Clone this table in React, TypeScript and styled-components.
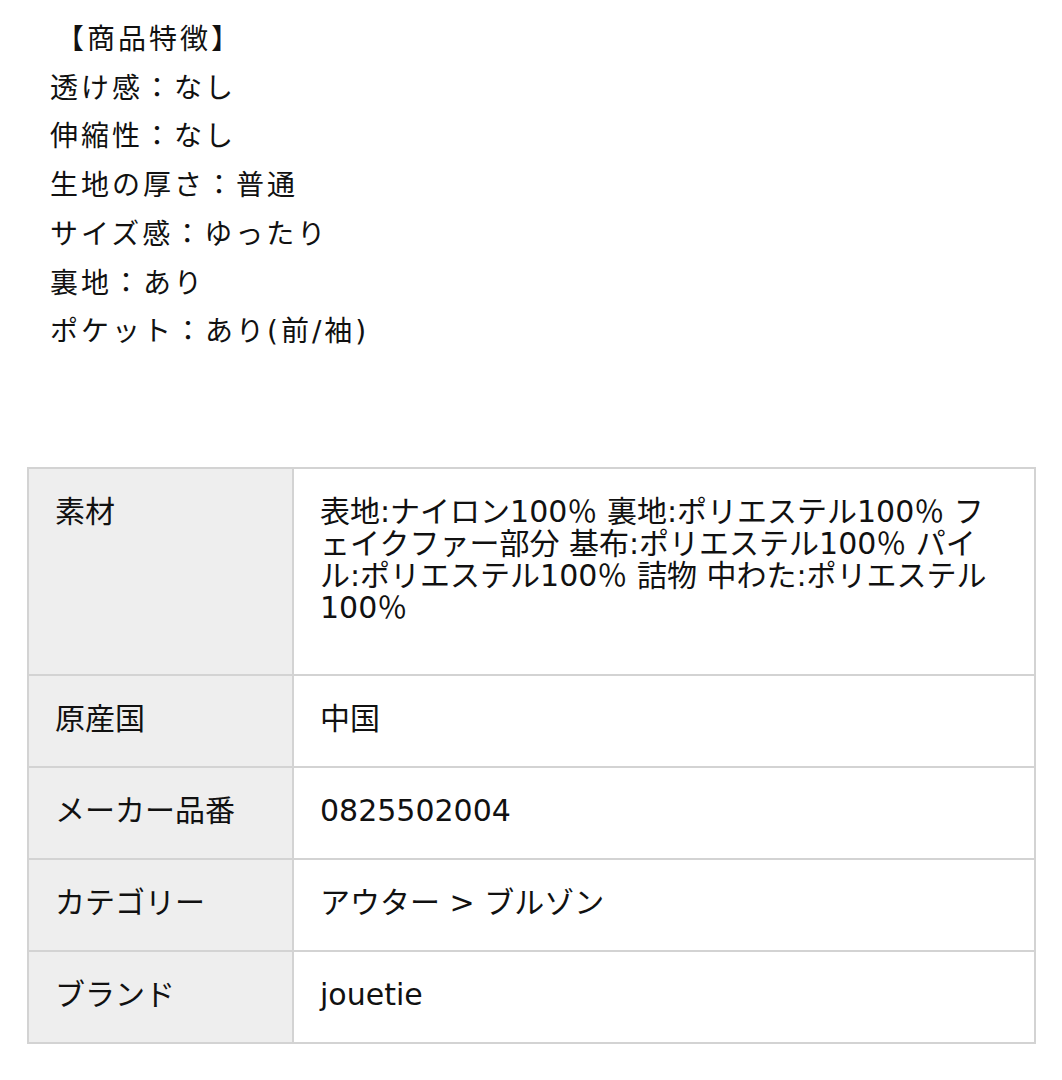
import React from 'react'
import styled, { createGlobalStyle } from 'styled-components'

interface SpecRow {
    label: string
    value: string
    tall?: boolean
}

const features: string[] = [
    '【商品特徴】',
    '透け感：なし',
    '伸縮性：なし',
    '生地の厚さ：普通',
    'サイズ感：ゆったり',
    '裏地：あり',
    'ポケット：あり(前/袖)',
]

const specs: SpecRow[] = [
    {
        label: '素材',
        value: '表地:ナイロン100％ 裏地:ポリエステル100％ フェイクファー部分 基布:ポリエステル100％ パイル:ポリエステル100％ 詰物 中わた:ポリエステル100％',
        tall: true,
    },
    { label: '原産国', value: '中国' },
    { label: 'メーカー品番', value: '0825502004' },
    { label: 'カテゴリー', value: 'アウター > ブルゾン' },
    { label: 'ブランド', value: 'jouetie' },
]

export default function App() {
    return (
        <>
            <GlobalStyle />
            <Page>
                <Features>
                    {features.map((line, i) => (
                        <FeatureLine key={line} $heading={i === 0}>
                            {line}
                        </FeatureLine>
                    ))}
                </Features>

                <SpecTable>
                    <colgroup>
                        <LabelCol />
                        <col />
                    </colgroup>
                    <tbody>
                        {specs.map((row) => (
                            <tr key={row.label}>
                                <LabelCell $tall={row.tall}>{row.label}</LabelCell>
                                <ValueCell $tall={row.tall}>{row.value}</ValueCell>
                            </tr>
                        ))}
                    </tbody>
                </SpecTable>
            </Page>
        </>
    )
}

const GlobalStyle = createGlobalStyle`
    html, body {
        margin: 0;
        padding: 0;
        background: #ffffff;
    }
    body {
        font-family: "DejaVu Sans", "Noto Sans CJK JP", sans-serif;
        color: #111111;
    }
`

const Page = styled.div`
    width: 1062px;
    min-height: 1080px;
    box-sizing: border-box;
    padding: 16px 26px 0 27px;
`

const Features = styled.div`
    padding-left: 23px;
    font-size: 28px;
    letter-spacing: 3px;
    line-height: 48.7px;
`

const FeatureLine = styled.div<{ $heading?: boolean }>`
    white-space: nowrap;
    padding-left: ${(p) => (p.$heading ? '6px' : '0')};
`

const SpecTable = styled.table`
    margin-top: 110px;
    width: 1009px;
    table-layout: fixed;
    border-collapse: collapse;
    border: 2px solid #d3d3d3;
    font-size: 30px;
    line-height: 32px;
`

const LabelCol = styled.col`
    width: 265px;
`

const Cell = styled.td<{ $tall?: boolean }>`
    border: 2px solid #d3d3d3;
    vertical-align: top;
    text-align: left;
    padding: 27px 26px ${(p) => (p.$tall ? '50px' : '31px')};
`

const LabelCell = styled(Cell)`
    background: #eeeeee;
    font-weight: normal;
`

const ValueCell = styled(Cell)`
    background: #ffffff;
    padding-right: 38px;
    line-break: normal;
`
